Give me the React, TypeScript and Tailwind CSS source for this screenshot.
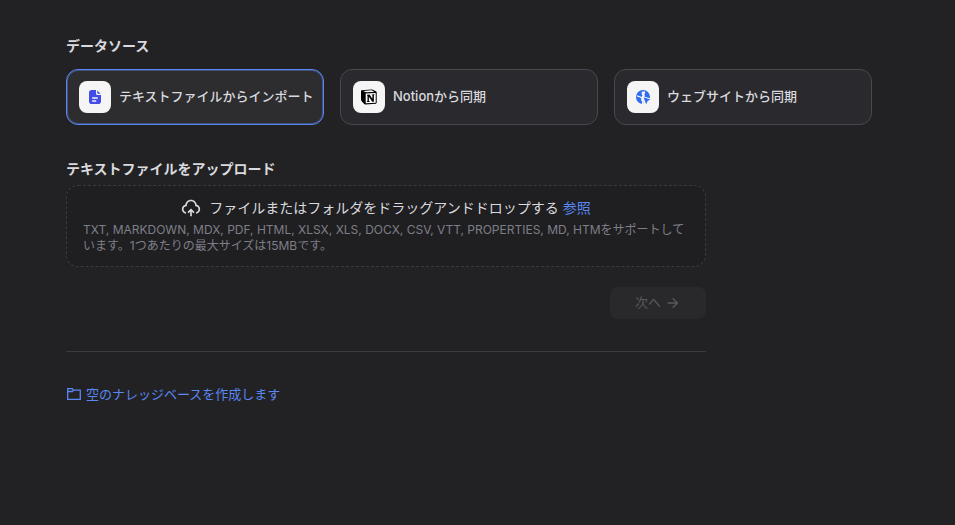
import React, { useState } from "react";
import clsx from "clsx";
import { RiArrowRightLine, RiUploadCloud2Line } from "react-icons/ri";

const FileIcon = () => (
  <svg width="16" height="16" viewBox="0 0 16 16" aria-hidden="true">
    <path
      fill="#444ce7"
      fillRule="evenodd"
      d="M4.6 1H9v3.4C9 5.3 9.7 6 10.6 6H14v6.4c0 1.5-1.1 2.6-2.6 2.6H4.6C3.1 15 2 13.9 2 12.4V3.6C2 2.1 3.1 1 4.6 1ZM5.7 8.3a.7.7 0 0 0 0 1.4h4.6a.7.7 0 0 0 0-1.4H5.7Zm0 3a.7.7 0 0 0 0 1.4h3a.7.7 0 0 0 0-1.4h-3Z"
    />
    <path fill="#444ce7" d="M10.3 1.4 13.6 4.7H10.9a.6.6 0 0 1-.6-.6V1.4Z" />
  </svg>
);

const NotionIcon = () => (
  <svg width="20" height="20" viewBox="0 0 20 20" aria-hidden="true">
    <path fill="#000" d="M2.3 3.2 12.8 2.4 14 2.7 17.3 4.6 17.7 5.4V15.8L17 16.8 6.2 17.5 5.2 17.1 2.5 14 2 12.9V3.8Z" />
    <path fill="#fff" d="M4.2 3.9 12.7 3.3 15.4 4.7 6.9 5.2Z" />
    <path fill="#fff" d="M6.7 6.5 16.7 5.9V15.7L6.7 16.3Z" />
    <path fill="#000" d="M8 7.8 10.6 7.6 13.4 11.8V8.3L12.7 8.1V7.4L15.5 7.2V7.9L14.9 8.2V14.7L13.2 14.8 9.9 9.8V14L10.700 14.200V14.900L7.800 15.100V14.400L8.500 14.100V8.700L8 8.500Z" />
  </svg>
);

const WebIcon = () => (
  <svg width="16" height="16" viewBox="0 0 16 16" aria-hidden="true">
    <circle cx="8" cy="8" r="7" fill="#2f6bf0" />
    <path
      fill="#f5f5f5"
      d="M6.7 2.8 9.6 2.2 10.3 3.6 9.4 5.2 10 7.2 8.3 8.2 8.7 15.2 6.9 15 7.2 12.7 5.9 10.9 6.6 9.6 4.4 8.3 1.9 7.5 2 6.3 4.4 7 6.4 8 7.4 6.7 6.7 5Z"
    />
    <path fill="#f5f5f5" d="M7.3 7 15.8 9.6 14.8 15.8 8.7 15.5Z" />
    <path fill="#2f6bf0" d="M8.5 8.2 15.4 10.6 12.6 12 11.2 15.2Z" />
  </svg>
);

const FolderIcon = () => (
  <svg width="16" height="16" viewBox="0 0 16 16" fill="none" stroke="currentColor" strokeWidth="1.3" aria-hidden="true">
    <path d="M1.7 13.3V2.7H6.3L7.7 4.1H14.3V13.3Z" />
    <path d="M1.7 5.5H6.3L7.7 4.1" />
  </svg>
);

const sources = [
  { id: "file", title: "テキストファイルからインポート", icon: <FileIcon /> },
  { id: "notion", title: "Notionから同期", icon: <NotionIcon /> },
  { id: "web", title: "ウェブサイトから同期", icon: <WebIcon /> },
];

const SourceCard = ({ title, icon, active, onClick }: any) => (
  <button
    type="button"
    aria-pressed={active}
    onClick={onClick}
    className={clsx(
      "flex h-14 items-center gap-2 rounded-xl px-3 text-left text-[13px] font-medium text-[#d9d9de]",
      active
        ? "border border-[#5a87f2] bg-[#2d2d2f] ring-1 ring-inset ring-[#5a87f2]/40"
        : "border border-[#48484f] bg-[#29292e]"
    )}
  >
    <span className="flex size-8 shrink-0 items-center justify-center rounded-lg bg-[#f5f5f5]">
      {icon}
    </span>
    <span className="whitespace-nowrap">{title}</span>
  </button>
);

const App = () => {
  const [source, setSource] = useState("file");

  return (
    <main className="min-h-screen bg-[#222225] px-[66px] pt-9 font-['Inter','Noto_Sans_CJK_JP',sans-serif]">
      <h2 className="text-sm leading-5 font-semibold text-[#d9d9de]">データソース</h2>
      <div className="mt-[13px] grid max-w-[806px] grid-cols-3 gap-4">
        {sources.map((item) => (
          <SourceCard
            key={item.id}
            title={item.title}
            icon={item.icon}
            active={source === item.id}
            onClick={() => setSource(item.id)}
          />
        ))}
      </div>

      <div className="max-w-[640px]">
        <h2 className="mt-8 text-sm leading-6 font-semibold text-[#d9d9de]">
          テキストファイルをアップロード
        </h2>
        <div className="mt-1 rounded-xl border border-dashed border-[#3a3a40] bg-[#1f1f22] px-4 py-3">
          <div className="flex items-center justify-center text-sm leading-5 text-[#d9d9de]">
            <RiUploadCloud2Line size={20} className="mr-2" />
            <span>ファイルまたはフォルダをドラッグアンドドロップする</span>
            <label className="ml-1 cursor-pointer text-[#5a87f2]">
              参照
              <input type="file" multiple className="sr-only" />
            </label>
          </div>
          <p className="mt-1 text-xs leading-4 text-[#7e7e87]">
            TXT, MARKDOWN, MDX, PDF, HTML, XLSX, XLS, DOCX, CSV, VTT, PROPERTIES, MD, HTMをサポートしています。1つあたりの最大サイズは15MBです。
          </p>
        </div>

        <div className="mt-5 flex justify-end">
          <button
            type="button"
            disabled
            className="flex h-8 w-24 items-center justify-center gap-1 rounded-lg bg-[#29292b] text-[13px] text-[#59595d]"
          >
            次へ
            <RiArrowRightLine size={16} />
          </button>
        </div>

        <hr className="my-8 border-[#3b3b3f]" />

        <a href="#" className="flex w-fit items-center gap-1 text-[13px] leading-5 text-[#5a87f2]">
          <FolderIcon />
          空のナレッジベースを作成します
        </a>
      </div>
    </main>
  );
};

export default App;
